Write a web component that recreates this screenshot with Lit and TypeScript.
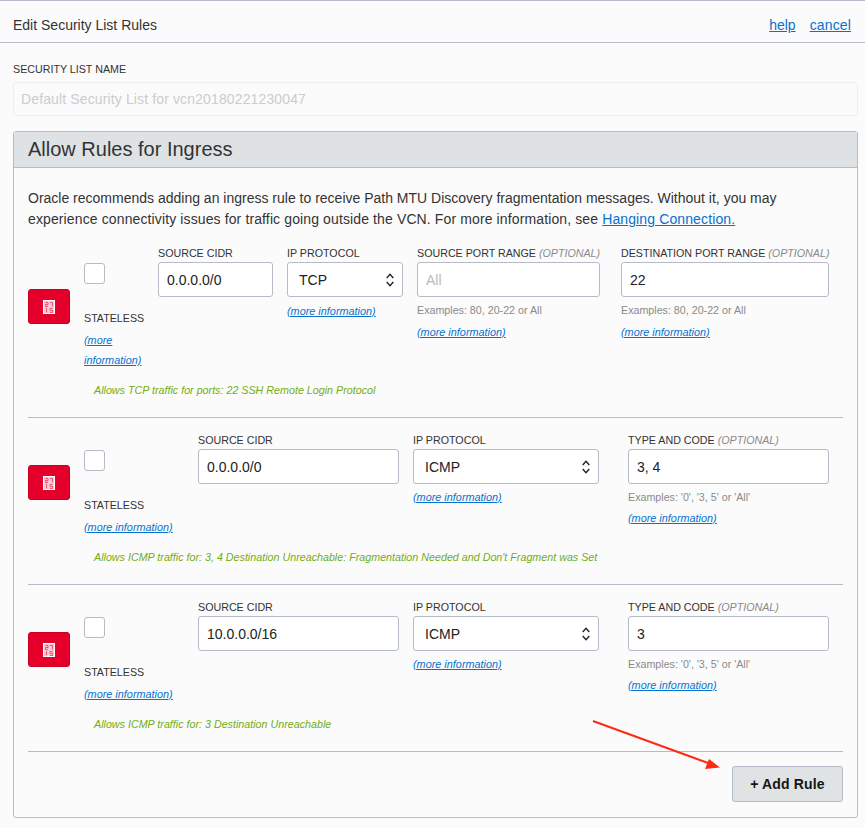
// app.ts
// Edit Security List Rules panel

import { LitElement, html, css, svg } from "lit";
import { customElement } from "lit/decorators.js";

interface Rule {
  kind: "tcp" | "icmp";
  cidr: string;
  protocol: string;
  value: string;
  message: string;
}

const RULES: Rule[] = [
  {
    kind: "tcp",
    cidr: "0.0.0.0/0",
    protocol: "TCP",
    value: "22",
    message: "Allows TCP traffic for ports: 22 SSH Remote Login Protocol",
  },
  {
    kind: "icmp",
    cidr: "0.0.0.0/0",
    protocol: "ICMP",
    value: "3, 4",
    message:
      "Allows ICMP traffic for: 3, 4 Destination Unreachable: Fragmentation Needed and Don't Fragment was Set",
  },
  {
    kind: "icmp",
    cidr: "10.0.0.0/16",
    protocol: "ICMP",
    value: "3",
    message: "Allows ICMP traffic for: 3 Destination Unreachable",
  },
];

// missing-glyph box the trash icon falls back to in the original
const tofuIcon = html`<svg width="12" height="14" viewBox="0 0 12 14">
  <rect width="12" height="14" fill="#f9c9d2"></rect>
  <rect x=".5" y=".5" width="11" height="13" fill="none" stroke="#fff"></rect>
  <path
    d="M2.500 2.500h2.500v2h-2.500v2h2.500M7 2.500h2.500v4M3.500 8v4M7 8.500h2.500M7 8.500v2h2.500v2h-2.500"
    fill="none"
    stroke="#ea3a5a"
    stroke-width=".8"
  ></path>
</svg>`;

const chevrons = html`<svg class="chevrons" width="8" height="14" viewBox="0 0 8 14">
  <path d="M.7 5l3.300-3.600L7.300 5M.7 9l3.300 3.600L7.300 9" fill="none" stroke="#222" stroke-width="1.400"></path>
</svg>`;

const arrow = svg`<path d="M593 721L708 763" stroke="#ff2a14" stroke-width="2" fill="none"></path>
  <path d="M720 767.500L705 769 709 759z" fill="#ff2a14"></path>`;

@customElement("app-root")
export class AppRoot extends LitElement {
  static styles = css`
    :host {
      display: block;
      position: relative;
      height: 828px;
      box-sizing: border-box;
      overflow: hidden;
      background: #fbfbfb;
      color: #333;
      font-family: "Liberation Sans", Arial, sans-serif;
      font-size: 14px;
    }

    * {
      box-sizing: border-box;
    }

    a {
      color: #0572ce;
      text-decoration: underline;
    }

    .top-bar {
      display: flex;
      justify-content: space-between;
      align-items: center;
      height: 43px;
      padding: 6px 14px 0 13px;
      border-top: 1px solid #b5bcc8;
      border-bottom: 1px solid #b5bcc8;
    }

    .top-actions {
      display: flex;
      gap: 14px;
    }

    .cancel {
      letter-spacing: 0.15px;
    }

    .content {
      padding: 0 7px 0 13px;
    }

    .name-label {
      height: 39px;
      padding-top: 19px;
      font-size: 10.700px;
      line-height: 14px;
    }

    .name-input {
      display: block;
      width: 100%;
      height: 34px;
      padding: 0 7px;
      border: 1px solid #eeeeee;
      border-radius: 3px;
      background: #fbfbfb;
      color: #ccc;
      font: inherit;
      letter-spacing: 0.13px;
    }

    .panel {
      margin-top: 15px;
      height: 687px;
      border: 1px solid #b5bcc8;
      border-radius: 3px;
    }

    .panel-head {
      height: 36px;
      padding-left: 14px;
      border-bottom: 1px solid #b5bcc8;
      background: #dfe2e5;
      font-size: 20px;
      line-height: 34px;
    }

    .panel-body {
      padding: 20px 14px 0;
    }

    .intro {
      margin: 0 0 1px;
      line-height: 21px;
    }

    .stretch {
      letter-spacing: 0.12px;
    }

    .rule {
      padding: 10px 0 17px;
      border-bottom: 1px solid #b5bcc8;
    }

    .rule-main {
      display: flex;
      align-items: center;
      gap: 14px;
    }

    .delete {
      display: flex;
      align-items: center;
      justify-content: center;
      flex: none;
      width: 42px;
      height: 35px;
      padding: 0;
      border: 1px solid #c8001f;
      border-radius: 3px;
      background: #e4002b;
    }

    .rule.tcp .delete {
      margin-top: 2px;
    }

    .fields {
      display: grid;
      flex: 1;
      column-gap: 14px;
    }

    .rule.tcp .fields {
      grid-template-columns: 60px 115px 116px 190px 208px;
    }

    .rule.icmp .fields {
      grid-template-columns: 100px 201px 201px 201px;
    }

    .stateless {
      padding-top: 22px;
    }

    .checkbox {
      width: 21px;
      height: 21px;
      border: 1px solid #b5bcc8;
      border-radius: 3px;
      background: #fff;
    }

    .stateless-label {
      margin-top: 24px;
      font-size: 10.700px;
      line-height: 20px;
      white-space: nowrap;
    }

    .more {
      display: block;
      font-size: 10.870px;
      font-style: italic;
      line-height: 20px;
    }

    .stateless .more {
      margin-top: 2px;
    }

    .field-label {
      height: 21px;
      padding-top: 3px;
      font-size: 10.700px;
      line-height: 18px;
      white-space: nowrap;
    }

    .field-label em {
      color: #8a8a8a;
    }

    .field input,
    .select {
      display: block;
      width: 100%;
      height: 35px;
      padding: 0 8px;
      border: 1px solid #b5bcc8;
      border-radius: 3px;
      background: #fff;
      color: #222;
      font: inherit;
      outline: none;
    }

    .field input::placeholder {
      color: #bbb;
      opacity: 1;
    }

    .select {
      display: flex;
      align-items: center;
      justify-content: space-between;
      padding: 0 8px 0 11px;
    }

    .rule.tcp .short {
      margin-right: 7px;
    }

    .rule.icmp .select-field {
      padding-right: 15px;
    }

    .hint {
      margin-top: 3px;
      color: #8a8a8a;
      font-size: 10.700px;
      line-height: 20px;
    }

    .select-field .more {
      margin-top: 3px;
    }

    .rule.tcp .select-field .more {
      margin-top: 4px;
    }

    .hint + .more {
      margin-top: 1px;
    }

    .rule.tcp .hint + .more {
      margin-top: 2px;
    }

    .message {
      margin: 10px 0 0 66px;
      color: #74ad12;
      font-size: 10.720px;
      font-style: italic;
      line-height: 20px;
    }

    .panel-foot {
      display: flex;
      justify-content: flex-end;
      padding-top: 14px;
    }

    .add-rule {
      width: 111px;
      height: 36px;
      border: 1px solid #b5bcc8;
      border-radius: 3px;
      background: #dfe3e4;
      color: #161513;
      font: bold 14px "Liberation Sans", Arial, sans-serif;
      letter-spacing: 0.15px;
    }

    .annotation {
      position: absolute;
      top: 0;
      left: 0;
      pointer-events: none;
    }
  `;

  private renderRule(rule: Rule) {
    const more = html`<a class="more" href="#">(more information)</a>`;
    const isTcp = rule.kind === "tcp";
    return html`
      <div class="rule ${rule.kind}">
        <div class="rule-main">
          <button class="delete">${tofuIcon}</button>
          <div class="fields">
            <div class="stateless">
              <div class="checkbox"></div>
              <div class="stateless-label">STATELESS</div>
              ${more}
            </div>
            <div class="field">
              <div class="field-label">SOURCE CIDR</div>
              <input .value=${rule.cidr} />
            </div>
            <div class="field select-field">
              <div class="field-label">IP PROTOCOL</div>
              <div class="select"><span>${rule.protocol}</span>${chevrons}</div>
              ${more}
            </div>
            ${isTcp
              ? html`
                  <div class="field">
                    <div class="field-label">SOURCE PORT RANGE <em>(OPTIONAL)</em></div>
                    <div class="short"><input placeholder="All" /></div>
                    <div class="hint">Examples: 80, 20-22 or All</div>
                    ${more}
                  </div>
                `
              : ""}
            <div class="field">
              <div class="field-label">
                ${isTcp ? "DESTINATION PORT RANGE" : "TYPE AND CODE"} <em>(OPTIONAL)</em>
              </div>
              <input .value=${rule.value} />
              <div class="hint">
                ${isTcp ? "Examples: 80, 20-22 or All" : "Examples: '0', '3, 5' or 'All'"}
              </div>
              ${more}
            </div>
          </div>
        </div>
        <div class="message">${rule.message}</div>
      </div>
    `;
  }

  protected render() {
    return html`
      <div class="top-bar">
        <span>Edit Security List Rules</span>
        <div class="top-actions">
          <a href="#">help</a>
          <a class="cancel" href="#">cancel</a>
        </div>
      </div>
      <div class="content">
        <div class="name-label">SECURITY LIST NAME</div>
        <input class="name-input" disabled value="Default Security List for vcn20180221230047" />
        <div class="panel">
          <div class="panel-head">Allow Rules for Ingress</div>
          <div class="panel-body">
            <p class="intro">
              Oracle recommends adding an ingress rule to receive Path MTU Discovery fragmentation
              messages. Without it, you may
              <span class="stretch"
                >experience connectivity issues for traffic going outside the VCN. For more
                information, see <a href="#">Hanging Connection.</a></span
              >
            </p>
            ${RULES.map((rule) => this.renderRule(rule))}
            <div class="panel-foot">
              <button class="add-rule">+ Add Rule</button>
            </div>
          </div>
        </div>
      </div>
      <svg class="annotation" width="865" height="828">${arrow}</svg>
    `;
  }
}

declare global {
  interface HTMLElementTagNameMap {
    "app-root": AppRoot;
  }
}
